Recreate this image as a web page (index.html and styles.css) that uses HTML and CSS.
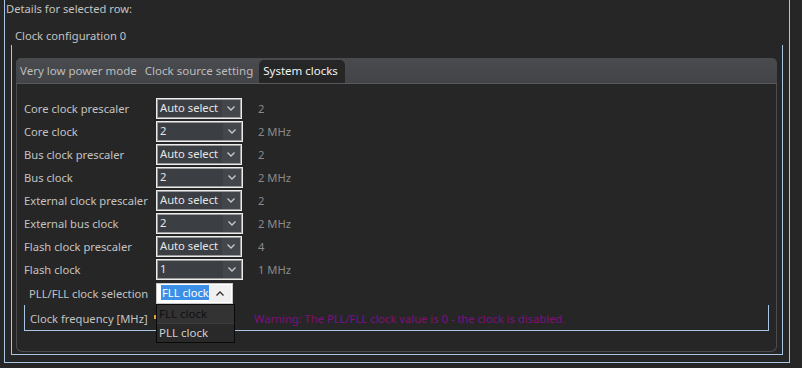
FILE: index.html
```html
<!DOCTYPE html>
<html lang="en">
<head>
    <meta charset="UTF-8">
    <title>Clock configuration</title>
    <link rel="stylesheet" href="styles.css">
</head>
<body>
    <div class="outer">
        <div class="details-title">Details for selected row:</div>
        <div class="group-title">Clock configuration 0</div>
        <div class="group">
            <div class="tabs">
                <div class="tab-bar">
                    <span class="tab">Very low power mode</span>
                    <span class="tab">Clock source setting</span>
                    <span class="tab active">System clocks</span>
                </div>
                <div class="pane">
                    <div class="rows">
                        <span class="label">Core clock prescaler</span>
                        <span class="combo"><span class="combo-text">Auto select</span><span class="arrow"><svg width="8" height="5" viewBox="0 0 8 5"><polyline points="0.5,0.5 4,4 7.5,0.5" fill="none" stroke="#c8c8c8" stroke-width="1.4"/></svg></span></span>
                        <span class="value">2</span>

                        <span class="label">Core clock</span>
                        <span class="combo wide"><span class="combo-text">2</span><span class="arrow"><svg width="8" height="5" viewBox="0 0 8 5"><polyline points="0.5,0.5 4,4 7.5,0.5" fill="none" stroke="#c8c8c8" stroke-width="1.4"/></svg></span></span>
                        <span class="value">2 MHz</span>

                        <span class="label">Bus clock prescaler</span>
                        <span class="combo"><span class="combo-text">Auto select</span><span class="arrow"><svg width="8" height="5" viewBox="0 0 8 5"><polyline points="0.5,0.5 4,4 7.5,0.5" fill="none" stroke="#c8c8c8" stroke-width="1.4"/></svg></span></span>
                        <span class="value">2</span>

                        <span class="label">Bus clock</span>
                        <span class="combo wide"><span class="combo-text">2</span><span class="arrow"><svg width="8" height="5" viewBox="0 0 8 5"><polyline points="0.5,0.5 4,4 7.5,0.5" fill="none" stroke="#c8c8c8" stroke-width="1.4"/></svg></span></span>
                        <span class="value">2 MHz</span>

                        <span class="label">External clock prescaler</span>
                        <span class="combo"><span class="combo-text">Auto select</span><span class="arrow"><svg width="8" height="5" viewBox="0 0 8 5"><polyline points="0.5,0.5 4,4 7.5,0.5" fill="none" stroke="#c8c8c8" stroke-width="1.4"/></svg></span></span>
                        <span class="value">2</span>

                        <span class="label">External bus clock</span>
                        <span class="combo wide"><span class="combo-text">2</span><span class="arrow"><svg width="8" height="5" viewBox="0 0 8 5"><polyline points="0.5,0.5 4,4 7.5,0.5" fill="none" stroke="#c8c8c8" stroke-width="1.4"/></svg></span></span>
                        <span class="value">2 MHz</span>

                        <span class="label">Flash clock prescaler</span>
                        <span class="combo"><span class="combo-text">Auto select</span><span class="arrow"><svg width="8" height="5" viewBox="0 0 8 5"><polyline points="0.5,0.5 4,4 7.5,0.5" fill="none" stroke="#c8c8c8" stroke-width="1.4"/></svg></span></span>
                        <span class="value">4</span>

                        <span class="label">Flash clock</span>
                        <span class="combo wide"><span class="combo-text">1</span><span class="arrow"><svg width="8" height="5" viewBox="0 0 8 5"><polyline points="0.5,0.5 4,4 7.5,0.5" fill="none" stroke="#c8c8c8" stroke-width="1.4"/></svg></span></span>
                        <span class="value">1 MHz</span>
                    </div>

                    <div class="pll-row">
                        <span class="label indent">PLL/FLL clock selection</span>
                        <span class="combo open"><span class="combo-text"><span class="selected">FLL clock</span></span><span class="arrow"><svg width="8" height="5" viewBox="0 0 8 5"><polyline points="0.5,4.5 4,1 7.5,4.5" fill="none" stroke="#333" stroke-width="1.4"/></svg></span></span>
                    </div>

                    <div class="freq-box">
                        <span class="freq-label">Clock frequency [MHz]</span>
                        <span class="freq-mark"></span>
                        <span class="warning">Warning: The PLL/FLL clock value is 0 - the clock is disabled.</span>
                    </div>

                    <!-- open dropdown of the PLL/FLL combo -->
                    <div class="dropdown">
                        <div class="item hover">FLL clock</div>
                        <div class="item">PLL clock</div>
                    </div>
                </div>
            </div>
        </div>
    </div>
</body>
</html>
```

FILE: styles.css
```css
body {
    margin: 0;
    background-color: #262626;
    font-family: "Noto Sans", sans-serif;
    font-size: 11.2px;
    color: #c3c3c3;
    white-space: nowrap;
}

.outer {
    margin-left: 4px;
    width: 784px;
    height: 362px;
    border: 1px solid #a9c6e4;
    border-top: none;
}

.details-title {
    height: 18px;
    line-height: 18px;
    padding-left: 1px;
}

.group-title {
    margin-top: 9px;
    height: 18px;
    line-height: 18px;
    padding-left: 10px;
}

.group {
    margin: 0 6px;
    height: 296px;
    padding-top: 13px;
    border: 1px solid #a9c6e4;
    border-top: none;
}

.tabs {
    margin: 0 5px 0 4px;
    height: 294px;
    display: flex;
    flex-direction: column;
}

.tab-bar {
    height: 25px;
    display: flex;
    align-items: flex-end;
    padding-left: 1px;
    background: linear-gradient(#4a4b4f, #434448);
    border-radius: 5px 5px 0 0;
    border-bottom: 1px solid #58595c;
    font-size: 11.5px;
}

.tab {
    height: 23px;
    line-height: 22px;
    padding: 0 5px 0 3px;
    color: #bdbdbd;
}

.tab.active {
    margin-left: 1px;
    padding: 0 7px 0 4px;
    background-color: #262626;
    color: #f2f2f2;
    border-radius: 5px 5px 0 0;
}

.pane {
    position: relative;
    flex: 1;
    padding: 13px 0 0 7px;
    border: 1px solid #4c4c4c;
    border-top: none;
    border-radius: 0 0 6px 6px;
}

.rows {
    display: grid;
    grid-template-columns: 132px 102px auto;
    grid-auto-rows: 23px;
    align-items: center;
}

.label {
    color: #c3c3c3;
}

.label.indent {
    padding-left: 5px;
    width: 127px;
}

.value {
    color: #8a8a8a;
}

.combo {
    display: flex;
    width: 86px;
    height: 21px;
    box-sizing: border-box;
    border: 1px solid #ececec;
    box-shadow: inset 0 0 0 1px #9a9a9a;
    background-color: #3b3e43;
    color: #e6e6e6;
}

.combo.wide {
    width: 87px;
}

.combo-text {
    flex: 1;
    padding-left: 3px;
    line-height: 17px;
    overflow: hidden;
}

.arrow {
    width: 18px;
    display: flex;
    align-items: center;
    justify-content: center;
    background-color: #43464b;
    margin: 1px 1px 1px 0;
}

.pll-row {
    display: flex;
    align-items: center;
    height: 23px;
    margin-top: 1px;
}

.combo.open {
    width: 77px;
    background-color: #ffffff;
    box-shadow: none;
    border-color: #c8c8c8;
}

.combo.open .combo-text {
    padding: 1px 0 0 4px;
    line-height: 15px;
}

.combo.open .arrow {
    width: 22px;
    background-color: #f0f0f0;
}

.selected {
    display: inline-block;
    background-color: #3b8fe6;
    color: #ffffff;
    padding: 0 2px 0 1px;
}

.freq-box {
    display: flex;
    align-items: center;
    width: 738px;
    height: 21px;
    padding: 3px 0 1px 5px;
    border: 1px solid #a9c6e4;
    border-top: none;
}

.freq-label {
    width: 124px;
}

.freq-mark {
    width: 3px;
    height: 4px;
    margin-top: -4px;
    background-color: #e1a33a;
}

.warning {
    margin-left: 97px;
    color: #7e0f7e;
}

.dropdown {
    position: absolute;
    left: 139px;
    top: 220px;
    width: 77px;
    border: 1px solid #0a0a0a;
    background-color: #292929;
    font-size: 11.5px;
}

.item {
    height: 18px;
    line-height: 18px;
    padding-left: 2px;
    color: #cfcfcf;
}

.item.hover {
    color: #101010;
    background-color: #333333;
    border-bottom: 1px solid #3c3c3c;
}
```
